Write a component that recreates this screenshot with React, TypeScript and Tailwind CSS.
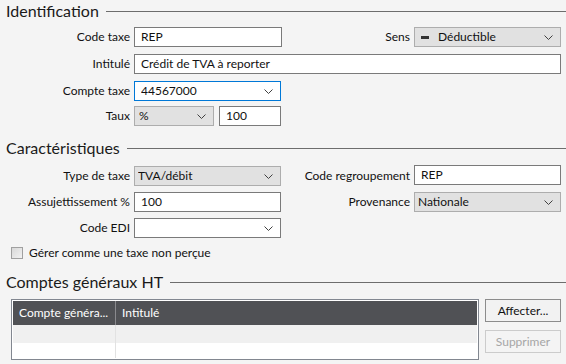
import type { ReactNode } from "react";

const FONT = { fontFamily: 'Lato, "Noto Sans", sans-serif' };

function Section({ title }: { title: string }) {
  return (
    <div className="flex h-[22px] items-center">
      <span className="pl-[6px] pr-[7px] text-[16px] leading-none text-[#1a1a1a]">{title}</span>
      <div className="h-px flex-1 bg-[#6d6d6d]" />
    </div>
  );
}

function Label({ children }: { children: ReactNode }) {
  return (
    <div className="flex h-5 items-center justify-end whitespace-nowrap text-[12px] text-[#111]">
      {children}
    </div>
  );
}

function Chevron() {
  return (
    <svg width="9" height="5" viewBox="0 0 9 5" className="shrink-0">
      <polyline points="0.5,0.5 4.5,4.5 8.5,0.5" fill="none" stroke="#404040" strokeWidth="1" />
    </svg>
  );
}

function Input({ value = "", className = "" }: { value?: string; className?: string }) {
  return (
    <div
      className={`flex h-5 items-center border border-[#7a7a7a] bg-white pl-[6px] text-[12px] text-[#111] ${className}`}
    >
      {value}
    </div>
  );
}

// combo: either a read-only grey dropdown or an editable white one
function Select({
  value = "",
  editable = false,
  focused = false,
  icon,
  className = "",
}: {
  value?: string;
  editable?: boolean;
  focused?: boolean;
  icon?: ReactNode;
  className?: string;
}) {
  const look = editable
    ? focused
      ? "border-[#0078d7] bg-white pl-[6px]"
      : "border-[#7a7a7a] bg-white pl-[6px]"
    : "border-[#adadad] bg-[#e1e1e1] pl-[3px]";
  return (
    <div className={`flex h-5 items-center border pr-[7px] text-[12px] text-[#111] ${look} ${className}`}>
      {icon}
      <span className="flex-1 truncate">{value}</span>
      <Chevron />
    </div>
  );
}

export default function App() {
  return (
    <div className="h-[364px] w-[566px] overflow-hidden bg-[#f4f4f4]" style={FONT}>
      <Section title="Identification" />

      <div className="mt-[5px] grid w-[561px] grid-cols-[130px_148px_124px_147px] gap-x-1">
        <Label>Code taxe</Label>
        <Input value="REP" />
        <Label>Sens</Label>
        <Select
          value="Déductible"
          className="pl-[6px]"
          icon={<span className="mr-[9px] h-[3px] w-[8px] bg-[#333]" />}
        />

        <div className="col-span-4 h-[7px]" />
        <Label>Intitulé</Label>
        <Input value="Crédit de TVA à reporter" className="col-span-3" />

        <div className="col-span-4 h-[7px]" />
        <Label>Compte taxe</Label>
        <Select value="44567000" editable focused className="w-[147px]" />
        <div className="col-span-2" />

        <div className="col-span-4 h-[5px]" />
        <Label>Taux</Label>
        <div className="flex w-[147px] gap-[5px]">
          <Select value="%" className="w-[80px] pl-[4px]" />
          <Input value="100" className="flex-1" />
        </div>
        <div className="col-span-2" />
      </div>

      <div className="mt-[11px]">
        <Section title="Caractéristiques" />
      </div>

      <div className="mt-[7px] grid w-[561px] grid-cols-[130px_148px_124px_147px] gap-x-1">
        <Label>Type de taxe</Label>
        <Select value="TVA/débit" className="w-[147px]" />
        <Label>Code regroupement</Label>
        <Input value="REP" className="-mt-px" />

        <div className="col-span-4 h-[6px]" />
        <Label>Assujettissement %</Label>
        <Input value="100" className="w-[147px]" />
        <Label>Provenance</Label>
        <Select value="Nationale" />

        <div className="col-span-4 h-[6px]" />
        <Label>Code EDI</Label>
        <Select editable className="w-[147px]" />
        <div className="col-span-2" />
      </div>

      <div className="mt-[7px] flex h-4 items-center gap-[6px] pl-[11px] text-[12px] text-[#111]">
        <span className="h-[12px] w-[12px] border border-[#a0a0a0] bg-gradient-to-br from-[#d8d8d8] to-[#f2f2f2]" />
        <span>Gérer comme une taxe non perçue</span>
      </div>

      <div className="mt-[10px]">
        <Section title="Comptes généraux HT" />
      </div>

      <div className="mt-[6px] flex gap-[6px] pl-[11px]">
        <div className="h-[61px] w-[468px] border border-[#828790] bg-white p-px">
          <div className="flex h-6 items-center bg-[#505155] text-[12px] text-white">
            <div className="flex h-full w-[103px] shrink-0 items-center overflow-hidden whitespace-nowrap border-r border-[#8a8a8e] pl-[6px]">
              Compte généra...
            </div>
            <div className="pl-[6px]">Intitulé</div>
          </div>
          <div className="flex h-[18px] bg-[#f0f0f0]">
            <div className="w-[103px] border-r border-[#e2e2e2]" />
          </div>
          <div className="flex h-[15px] bg-white">
            <div className="w-[103px] border-r border-[#e2e2e2]" />
          </div>
        </div>

        <div className="flex flex-col gap-[8px]">
          <div className="flex h-[23px] w-[76px] items-center justify-center border border-[#8c8c8c] bg-[#f2f2f2] text-[12px] text-[#111]">
            Affecter...
          </div>
          <div className="flex h-[23px] w-[76px] items-center justify-center border border-[#cccccc] bg-[#f4f4f4] text-[12px] text-[#a6a6a6]">
            Supprimer
          </div>
        </div>
      </div>
    </div>
  );
}
